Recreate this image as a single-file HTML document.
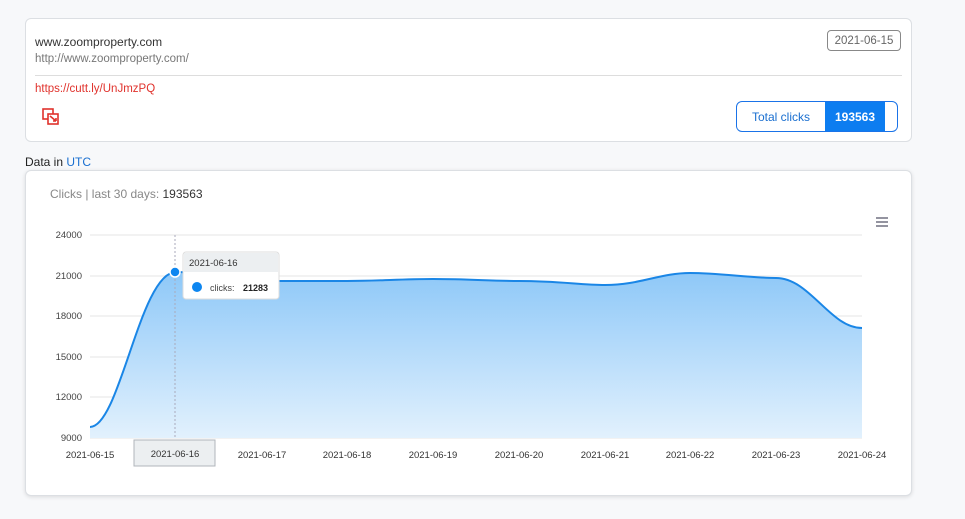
<!DOCTYPE html>
<html><head><meta charset="utf-8"><style>
body{margin:0;background:#f7f8fa;font-family:"Liberation Sans",sans-serif;width:965px;height:519px;overflow:hidden;position:relative}
.card{position:absolute;left:25px;top:18px;width:887px;height:124px;background:#fff;border:1px solid #dcdfe3;border-radius:6px;box-sizing:border-box}
.t{position:absolute;font-size:12px}
.chart{position:absolute;left:25px;top:170px;width:887px;height:326px;background:#fff;border:1px solid #dcdfe3;border-radius:6px;box-sizing:border-box;box-shadow:0 1px 4px rgba(0,0,0,.12)}
</style></head><body>
<div class="card">
<div class="t" style="left:9px;top:16px;color:#333;font-size:12px">www.zoomproperty.com</div>
<div class="t" style="left:9px;top:34px;color:#777;font-size:11.5px">http://www.zoomproperty.com/</div>
<div style="position:absolute;left:9px;right:9px;top:56px;border-top:1px solid #ddd"></div>
<div class="t" style="left:9px;top:64px;color:#e0322c;font-size:11.5px">https://cutt.ly/UnJmzPQ</div>
<svg style="position:absolute;left:16px;top:89px" width="18" height="18" viewBox="0 0 18 18" fill="none" stroke="#e0322c" stroke-width="1.6"><rect x="1" y="1" width="10" height="10"/><rect x="6" y="6" width="10" height="10" fill="#fff"/><path d="M8 8l6 5M14 13v-3M14 13h-3"/></svg>
<div style="position:absolute;left:801px;top:11px;width:74px;height:21px;border:1px solid #888;border-radius:4px;box-sizing:border-box;font-size:11.5px;color:#666;text-align:center;line-height:21px">2021-06-15</div>
<div style="position:absolute;left:710px;top:82px;width:162px;height:31px;border:1px solid #1a73e8;border-radius:6px;box-sizing:border-box;overflow:hidden">
<div style="position:absolute;left:0;top:0;width:88px;height:29px;line-height:30px;text-align:center;color:#1a6fd0;font-size:12px">Total clicks</div>
<div style="position:absolute;left:88px;top:0;width:60px;height:29px;line-height:30px;text-align:center;background:#0d7df0;color:#fff;font-weight:bold;font-size:12px">193563</div></div>
</div>
<div class="t" style="left:25px;top:155px;color:#222">Data in <span style="color:#1a6fd0">UTC</span></div>
<div class="chart"></div>
<div class="t" style="left:50px;top:187px;color:#888">Clicks | last 30 days: <span style="color:#333">193563</span></div>
<svg style="position:absolute;left:0;top:0" width="965" height="519">
<defs><linearGradient id="g" x1="0" y1="0" x2="0" y2="1"><stop offset="0" stop-color="#8ec8f8"/><stop offset="1" stop-color="#e2f1fd"/></linearGradient></defs>
<g stroke="#e6e6e6"><line x1="90" y1="235" x2="862" y2="235"/><line x1="90" y1="276" x2="862" y2="276"/><line x1="90" y1="316" x2="862" y2="316"/><line x1="90" y1="357" x2="862" y2="357"/><line x1="90" y1="397" x2="862" y2="397"/><line x1="90" y1="438" x2="862" y2="438"/></g>
<g font-size="9.5" fill="#444" text-anchor="end" font-family="Liberation Sans"><text x="82" y="238">24000</text><text x="82" y="279">21000</text><text x="82" y="319">18000</text><text x="82" y="360">15000</text><text x="82" y="400">12000</text><text x="82" y="441">9000</text></g>
<path d="M90 427 C120 427 140 272 176 272 C210 272 230 281 262 281 C300 281 320 281 347 281 C380 281 400 279 433 279 C470 279 490 281 519 281 C560 281 580 285 605 285 C640 285 660 273 690 273 C720 273 750 278 776 278 C810 278 830 328 862 328 L862 438 L90 438Z" fill="url(#g)"/>
<path d="M90 427 C120 427 140 272 176 272 C210 272 230 281 262 281 C300 281 320 281 347 281 C380 281 400 279 433 279 C470 279 490 281 519 281 C560 281 580 285 605 285 C640 285 660 273 690 273 C720 273 750 278 776 278 C810 278 830 328 862 328" fill="none" stroke="#1a86e6" stroke-width="2"/>
<line x1="175" y1="235" x2="175" y2="438" stroke="#aab" stroke-dasharray="2,2"/>
<circle cx="175" cy="272" r="5" fill="#0d86f0" stroke="#fff" stroke-width="1.5"/>
<g font-size="9.5" fill="#333" text-anchor="middle" font-family="Liberation Sans"><text x="90" y="458">2021-06-15</text><text x="262" y="458">2021-06-17</text><text x="347" y="458">2021-06-18</text><text x="433" y="458">2021-06-19</text><text x="519" y="458">2021-06-20</text><text x="605" y="458">2021-06-21</text><text x="690" y="458">2021-06-22</text><text x="776" y="458">2021-06-23</text><text x="862" y="458">2021-06-24</text></g>
<rect x="134" y="440" width="81" height="26" fill="#eceff1" stroke="#b0b6bb"/>
<text x="175" y="457" font-size="9.5" fill="#333" text-anchor="middle" font-family="Liberation Sans">2021-06-16</text>
<rect x="183" y="252" width="96" height="47" rx="3" fill="#fff" stroke="#ddd"/>
<rect x="184" y="253" width="94" height="19" fill="#eceff1"/>
<text x="189" y="266" font-size="9.5" fill="#333" font-family="Liberation Sans">2021-06-16</text>
<circle cx="197" cy="287" r="5" fill="#0d86f0"/>
<text x="210" y="291" font-size="9" fill="#444" font-family="Liberation Sans">clicks:  <tspan x="243" font-weight="bold" fill="#222">21283</tspan></text>
<g stroke="#667" stroke-width="1.4"><line x1="876" y1="218" x2="888" y2="218"/><line x1="876" y1="222" x2="888" y2="222"/><line x1="876" y1="226" x2="888" y2="226"/></g>
</svg>
</body></html>
